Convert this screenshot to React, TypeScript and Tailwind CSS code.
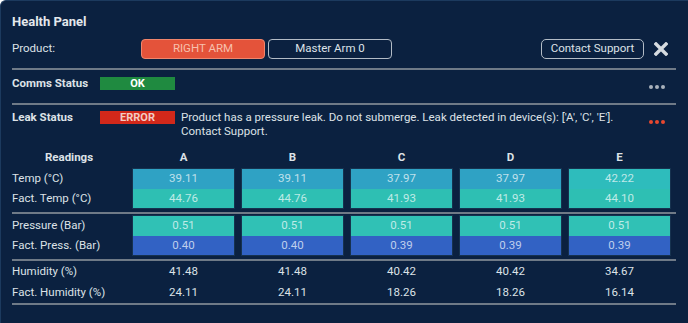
import React from "react";

const cols = ["A", "B", "C", "D", "E"];
const temp = ["39.11", "39.11", "37.97", "37.97", "42.22"];
const ftemp = ["44.76", "44.76", "41.93", "41.93", "44.10"];
const pres = ["0.51", "0.51", "0.51", "0.51", "0.51"];
const fpres = ["0.40", "0.40", "0.39", "0.39", "0.39"];
const hum = ["41.48", "41.48", "40.42", "40.42", "34.67"];
const fhum = ["24.11", "24.11", "18.26", "18.26", "16.14"];

function Dots({ color }: { color: string }) {
  return (
    <div className="flex gap-[2px]">
      <span className={`w-[4px] h-[4px] rounded-full ${color}`} />
      <span className={`w-[4px] h-[4px] rounded-full ${color}`} />
      <span className={`w-[4px] h-[4px] rounded-full ${color}`} />
    </div>
  );
}

function Line() {
  return <div className="h-[2px] bg-[#6f7a87]" />;
}

export default function App() {
  return (
    <div
      className="w-[688px] h-[323px] overflow-hidden bg-[#0b2140] text-[#dde2e7] text-[11.5px] pl-[11px] pr-3 rounded-tl-[6px] border-t border-l border-[#1c3a5e]"
      style={{ fontFamily: "Roboto, 'Liberation Sans', sans-serif" }}
    >
      <div className="mt-[12px] h-[18px] flex items-center font-bold text-[13px] text-[#e4e8ec]">Health Panel</div>
      <div className="mt-[8px] h-[20px] flex items-center">
        <div className="w-[129px]">Product:</div>
        <div className="w-[124px] h-[20px] rounded-[4px] bg-[#e4533a] border border-[#f0866c] text-[#f7c0ad] flex items-center justify-center">
          RIGHT ARM
        </div>
        <div className="ml-[3px] w-[124px] h-[20px] rounded-[4px] border border-[#b3bcc6] flex items-center justify-center">
          Master Arm 0
        </div>
        <div className="flex-1" />
        <div className="w-[103px] h-[20px] rounded-[5px] border border-[#b3bcc6] flex items-center justify-center">
          Contact Support
        </div>
        <svg className="ml-[10px] mr-[8px]" width="14" height="14" viewBox="0 0 14 14">
          <path d="M2 2 L12 12 M12 2 L2 12" stroke="#d6dbe0" strokeWidth="3.4" strokeLinecap="square" />
        </svg>
      </div>
      <div className="mt-[9px]"><Line /></div>
      <div className="h-[33px] pb-[6px] flex items-center">
        <div className="w-[88px] font-bold">Comms Status</div>
        <div className="w-[75px] h-[13px] bg-[#1f8a40] text-white font-bold text-[11px] leading-none flex items-center justify-center">OK</div>
        <div className="flex-1" />
        <div className="mr-[11px] mt-[6px]"><Dots color="bg-[#a9b1bb]" /></div>
      </div>
      <Line />
      <div className="pt-[5px] h-[42px] flex items-start">
        <div className="w-[88px] font-bold leading-[14px]">Leak Status</div>
        <div className="mt-[1px] w-[75px] h-[13px] bg-[#d2281a] text-[#f3cbc3] font-bold text-[11px] leading-none flex items-center justify-center">ERROR</div>
        <div className="ml-[6px] w-[440px] leading-[14px]">
          Product has a pressure leak. Do not submerge. Leak detected in device(s): ['A', 'C', 'E']. Contact Support.
        </div>
        <div className="flex-1" />
        <div className="mr-[11px] mt-[10px]"><Dots color="bg-[#e8472f]" /></div>
      </div>

      <div className="grid grid-cols-[114px_repeat(5,103px)] gap-x-[6px]">
        <div className="h-[21px] flex items-center justify-center font-bold">Readings</div>
        {cols.map((c) => (
          <div key={c} className="h-[21px] flex items-center justify-center font-bold">{c}</div>
        ))}
        <div className="flex flex-col">
          <div className="h-[20px] mt-[1px] flex items-center">Temp (°C)</div>
          <div className="h-[19px] flex items-center">Fact. Temp (°C)</div>
        </div>
        {cols.map((c, i) => (
          <div key={c} className="border border-[#16324f] text-white/70 flex flex-col">
            <div className={`h-[20px] flex items-center justify-center ${i === 4 ? "bg-[#2ebcbc]" : "bg-[#2fa2c4]"}`}>{temp[i]}</div>
            <div className="h-[19px] flex items-center justify-center bg-[#2ebfb3]">{ftemp[i]}</div>
          </div>
        ))}
      </div>
      <div className="mt-[3px]"><Line /></div>
      <div className="mt-[1px] grid grid-cols-[114px_repeat(5,103px)] gap-x-[6px]">
        <div className="flex flex-col">
          <div className="h-[20px] mt-[1px] flex items-center">Pressure (Bar)</div>
          <div className="h-[19px] flex items-center">Fact. Press. (Bar)</div>
        </div>
        {cols.map((c, i) => (
          <div key={c} className="border border-[#16324f] text-white/70 flex flex-col">
            <div className="h-[20px] flex items-center justify-center bg-[#30c1b5]">{pres[i]}</div>
            <div className="h-[19px] flex items-center justify-center bg-[#3262c4]">{fpres[i]}</div>
          </div>
        ))}
      </div>
      <div className="mt-[3px]"><Line /></div>
      <div className="grid grid-cols-[114px_repeat(5,103px)] gap-x-[6px]">
        <div className="h-[21px] flex items-center">Humidity (%)</div>
        {cols.map((c, i) => (
          <div key={c} className="h-[21px] flex items-center justify-center">{hum[i]}</div>
        ))}
        <div className="h-[21px] flex items-center">Fact. Humidity (%)</div>
        {cols.map((c, i) => (
          <div key={c} className="h-[21px] flex items-center justify-center">{fhum[i]}</div>
        ))}
      </div>
      <Line />
    </div>
  );
}
